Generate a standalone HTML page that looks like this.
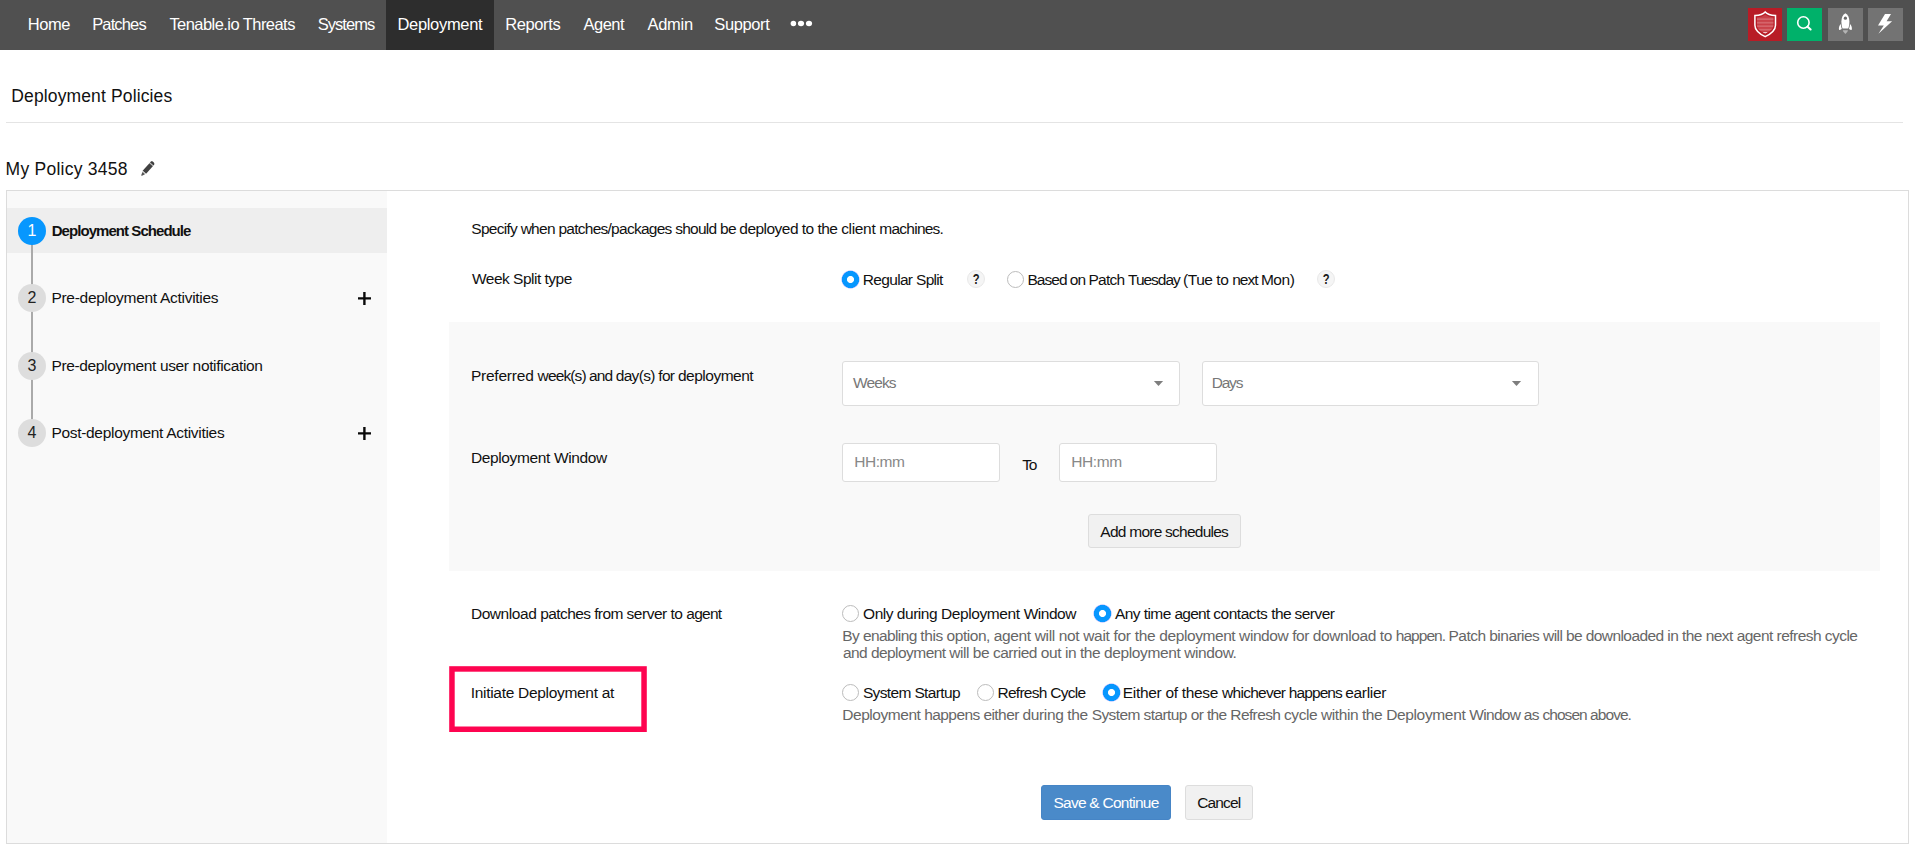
<!DOCTYPE html>
<html lang="en"><head><meta charset="utf-8"><title>Deployment Policies</title>
<style>
html,body{margin:0;padding:0;background:#fff;}
body{width:1915px;height:846px;position:relative;overflow:hidden;font-family:"Liberation Sans",sans-serif;}
.t{position:absolute;white-space:pre;line-height:20px;font-family:"Liberation Sans",sans-serif;}
.a{position:absolute;box-sizing:border-box;}
.nav{left:0;top:0;width:1915px;height:50px;background:#505050;}
.act{left:386px;top:0;width:108px;height:50px;background:#2d2d2d;}
.ib{top:8px;height:33px;}
.hr{left:6px;top:122px;width:1897px;height:1px;background:#e4e4e4;}
.panel{left:6px;top:190px;width:1903px;height:654px;border:1px solid #dcdcdc;background:#fff;}
.side{left:7px;top:191px;width:380px;height:652px;background:#f9f9f9;}
.row1{left:7px;top:208px;width:380px;height:45px;background:#eeeeee;}
.vline{left:31px;top:231px;width:2px;height:202px;background:#aaa;}
.circ{left:18px;width:28px;height:28px;border-radius:50%;background:#ddd;color:#222;font-size:16px;line-height:27.5px;text-align:center;}
.circ.on{background:#0797fe;color:#fff;}
.gray{left:449px;top:322px;width:1431px;height:249px;background:#f9f9f9;}
.sel{top:361px;width:338px;height:45px;background:#fff;border:1px solid #ddd;border-radius:3px;}
.inp{top:443px;width:158px;height:39px;background:#fff;border:1px solid #ddd;border-radius:3px;}
.btn{background:#f1f1f1;border:1px solid #ddd;border-radius:3px;}
.pri{background:#4a8ac9;border:1px solid #4685c6;border-radius:3px;}
.r{width:17px;height:17px;border-radius:50%;border:1.5px solid #bcbcbc;background:#fff;}
.r.on{border:0;border-radius:0;width:21px;height:21px;margin:-2px 0 0 -2px;background:radial-gradient(circle 10.5px at 50% 50%,#fff 0,#fff 3.1px,#0797fe 3.9px,#0797fe 8.3px,rgba(110,120,255,.5) 8.7px,rgba(110,120,255,0) 9.5px);}
.q{width:18px;height:18px;border-radius:50%;background:#f5f5f5;border:1px solid #e9e9e9;color:#1a1a1a;font-size:14px;font-weight:700;line-height:16px;text-align:center;}
.q b{display:inline-block;transform:scaleX(.8);}

</style></head>
<body>
<div class="a nav"></div>
<div class="a act"></div>
<svg class="a" style="left:788px;top:18px" width="26" height="11" viewBox="0 0 26 11"><ellipse cx="5.4" cy="5.5" rx="2.75" ry="2.65" fill="#fff"/><ellipse cx="13" cy="5.5" rx="3.05" ry="2.65" fill="#fff"/><ellipse cx="21" cy="5.5" rx="3.05" ry="2.65" fill="#fff"/></svg>
<div class="a ib" style="left:1748px;width:34px;background:#b81c26"></div>
<div class="a ib" style="left:1787px;width:35px;background:#00b16a"></div>
<div class="a ib" style="left:1828px;width:35px;background:#737373"></div>
<div class="a ib" style="left:1868px;width:35px;background:#737373"></div>
<svg class="a" style="left:1748px;top:8px" width="34" height="33" viewBox="0 0 34 33">
<defs><clipPath id="sh"><path d="M17.2 6.4 C15.6 7.8 12.6 9.1 9 9.2 L9 17 C9 20.8 12 23 17.2 25.6 C22.4 23 25.4 20.8 25.4 17 L25.4 9.2 C21.8 9.1 18.8 7.8 17.2 6.4 Z"/></clipPath></defs>
<path d="M17.2 3.9 C15.6 5.8 11.4 7.3 6.9 7.4 L6.9 17.2 C6.9 22.4 11 25.6 17.2 28.7 C23.4 25.6 27.5 22.4 27.5 17.2 L27.5 7.4 C23 7.3 18.8 5.8 17.2 3.9 Z" fill="none" stroke="#fff" stroke-width="1.5" stroke-linejoin="miter"/>
<g clip-path="url(#sh)"><rect x="8" y="6" width="19" height="18.2" fill="#c93f47"/>
<rect x="8" y="10.3" width="19" height="1.8" fill="#d5646a"/><rect x="8" y="13.8" width="19" height="1.8" fill="#d5646a"/><rect x="8" y="17.3" width="19" height="1.8" fill="#d5646a"/><rect x="8" y="20.8" width="19" height="1.8" fill="#d5646a"/>
<path d="M14.3 24.2 L20.1 24.2 L17.2 25.9 Z" fill="#fff"/></g>
</svg>
<svg class="a" style="left:1787px;top:8px" width="35" height="33" viewBox="0 0 35 33">
<circle cx="16.4" cy="14.5" r="5.7" fill="none" stroke="#fff" stroke-width="1.6"/>
<path d="M20.6 18.7 L23.6 21.5" stroke="#fff" stroke-width="2.1" stroke-linecap="round"/>
</svg>
<svg class="a" style="left:1828px;top:8px" width="35" height="33" viewBox="0 0 35 33">
<path d="M17.4 5.3 C15 6.6 13.4 9.6 13.4 13.4 C13.4 16.4 13.9 18.6 14.6 20.6 L20.2 20.6 C20.9 18.6 21.4 16.4 21.4 13.4 C21.4 9.6 19.8 6.6 17.4 5.3 Z" fill="#fff"/>
<path d="M12.8 15.9 C11.2 17.4 10.6 19.6 11 21.6 C11.1 22 11.5 22.1 11.9 21.9 L13.8 20.9 C13.2 19.4 12.8 17.6 12.8 15.9 Z M22 15.9 C23.6 17.4 24.2 19.6 23.8 21.6 C23.7 22 23.3 22.1 22.9 21.9 L21 20.9 C21.6 19.4 22 17.6 22 15.9 Z" fill="#fff"/>
<circle cx="17.4" cy="10.2" r="1.6" fill="#6a6a6a"/>
<path d="M14.8 22.3 L20 22.3 L19.4 23.8 L17.4 26 L15.4 23.8 Z" fill="#b4b4b4"/>
</svg>
<svg class="a" style="left:1868px;top:8px" width="35" height="33" viewBox="0 0 35 33">
<path d="M17 6 L23 6 L18.6 13.2 L24.1 13.2 L10.4 25.8 L15.8 17.4 L10 17.4 Z" fill="#fff"/>
</svg>
<div class="a hr"></div>
<svg class="a" style="left:139px;top:160px" width="17" height="18" viewBox="0 0 17 18">
<g transform="translate(8.35 8.95) rotate(41.5)">
<path d="M-2.3 -6.5 L-2.3 -7.6 C-2.3 -9.6 2.3 -9.6 2.3 -7.6 L2.3 -6.5 Z" fill="#3d3d3d"/>
<rect x="-2.3" y="-6.5" width="4.6" height="0.8" fill="#b5b5b5"/>
<rect x="-2.3" y="-5.7" width="4.6" height="10.2" fill="#414141"/>
<path d="M-2.3 4.5 L2.3 4.5 L1.7 5.5 L-1.7 5.5 Z" fill="#c8c8c8"/>
<path d="M-1.7 5.5 L1.7 5.5 L0.5 8.6 C0.3 9.2 -0.3 9.2 -0.5 8.6 Z" fill="#555"/>
</g>
</svg>
<div class="a panel"></div>
<div class="a side"></div>
<div class="a row1"></div>
<div class="a vline"></div>
<div class="a circ on" style="top:217px">1</div>
<div class="a circ" style="top:284px">2</div>
<div class="a circ" style="top:352px">3</div>
<div class="a circ" style="top:419px">4</div>
<svg class="a" style="left:358px;top:292px" width="13" height="13" viewBox="0 0 13 13"><path d="M0 6.4 H13 M6.4 0 V13" stroke="#0a0a0a" stroke-width="2.4" fill="none"/></svg>
<svg class="a" style="left:358px;top:427px" width="13" height="13" viewBox="0 0 13 13"><path d="M0 6.4 H13 M6.4 0 V13" stroke="#0a0a0a" stroke-width="2.4" fill="none"/></svg>
<div class="a gray"></div>
<div class="a sel" style="left:842px"></div>
<div class="a sel" style="left:1202px;width:337px"></div>
<svg class="a" style="left:1153px;top:380px" width="11" height="7" viewBox="0 0 11 7"><path d="M0.9 0.9 H10.1 L5.5 6 Z" fill="#7e7e7e"/></svg>
<svg class="a" style="left:1511px;top:380px" width="11" height="7" viewBox="0 0 11 7"><path d="M0.9 0.9 H10.1 L5.5 6 Z" fill="#7e7e7e"/></svg>
<div class="a inp" style="left:842px"></div>
<div class="a inp" style="left:1059px"></div>
<div class="a btn" style="left:1088px;top:514px;width:153px;height:34px"></div>
<div class="a r on" style="left:842px;top:271px"></div>
<div class="a q" style="left:967px;top:269.5px"><b>?</b></div>
<div class="a r" style="left:1006.5px;top:271px"></div>
<div class="a q" style="left:1317px;top:269.5px"><b>?</b></div>
<div class="a r" style="left:842px;top:605px"></div>
<div class="a r on" style="left:1094px;top:605px"></div>
<div class="a r" style="left:842px;top:684px"></div>
<div class="a r" style="left:976.7px;top:684px"></div>
<div class="a r on" style="left:1102.5px;top:684px"></div>
<svg class="a" style="left:449px;top:666px" width="198" height="66" viewBox="0 0 198 66"><rect x="2.95" y="2.95" width="192.1" height="60.3" fill="none" stroke="#fe0450" stroke-width="5.5"/></svg>
<div class="a pri" style="left:1041px;top:785px;width:130px;height:35px"></div>
<div class="a btn" style="left:1185px;top:785px;width:68px;height:35px"></div>

<span class="t" style="left:27.65px;top:14px;font-size:16.5px;color:#fff;letter-spacing:-0.376px">Home</span>
<span class="t" style="left:92.15px;top:14px;font-size:16.5px;color:#fff;letter-spacing:-0.846px">Patches</span>
<span class="t" style="left:169.43px;top:14px;font-size:16.5px;color:#fff;letter-spacing:-0.558px">Tenable.io Threats</span>
<span class="t" style="left:317.75px;top:14px;font-size:16.5px;color:#fff;letter-spacing:-0.970px">Systems</span>
<span class="t" style="left:397.45px;top:14px;font-size:16.5px;color:#fff;letter-spacing:-0.319px">Deployment</span>
<span class="t" style="left:505.15px;top:14px;font-size:16.5px;color:#fff;letter-spacing:-0.372px">Reports</span>
<span class="t" style="left:583.47px;top:14px;font-size:16.5px;color:#fff;letter-spacing:-0.493px">Agent</span>
<span class="t" style="left:647.47px;top:14px;font-size:16.5px;color:#fff;letter-spacing:-0.269px">Admin</span>
<span class="t" style="left:714.35px;top:14px;font-size:16.5px;color:#fff;letter-spacing:-0.404px">Support</span>
<span class="t" style="left:11.26px;top:86px;font-size:17.5px;color:#111;letter-spacing:0.134px">Deployment Policies</span>
<span class="t" style="left:5.56px;top:159px;font-size:17.5px;color:#111;letter-spacing:0.256px">My Policy 3458</span>
<span class="t" style="left:51.70px;top:221px;font-size:15px;color:#111;letter-spacing:-0.944px;font-weight:700">Deployment Schedule</span>
<span class="t" style="left:51.43px;top:288px;font-size:15.5px;color:#111;letter-spacing:-0.287px">Pre-deployment Activities</span>
<span class="t" style="left:51.43px;top:356px;font-size:15.5px;color:#111;letter-spacing:-0.349px">Pre-deployment user notification</span>
<span class="t" style="left:51.43px;top:423px;font-size:15.5px;color:#111;letter-spacing:-0.308px">Post-deployment Activities</span>
<span class="t" style="left:471.93px;top:269px;font-size:15.5px;color:#111;letter-spacing:-0.504px">Week Split type</span>
<span class="t" style="left:862.83px;top:270px;font-size:15.5px;color:#111;letter-spacing:-0.680px">Regular Split</span>
<span class="t" style="left:853.03px;top:373px;font-size:15.5px;color:#777;letter-spacing:-0.891px">Weeks</span>
<span class="t" style="left:1211.63px;top:373px;font-size:15.5px;color:#777;letter-spacing:-1.166px">Days</span>
<span class="t" style="left:470.93px;top:448px;font-size:15.5px;color:#111;letter-spacing:-0.364px">Deployment Window</span>
<span class="t" style="left:854.23px;top:452px;font-size:15.5px;color:#888;letter-spacing:-0.435px">HH:mm</span>
<span class="t" style="left:1022.35px;top:455px;font-size:15.5px;color:#111;letter-spacing:-1.276px">To</span>
<span class="t" style="left:1071.13px;top:452px;font-size:15.5px;color:#888;letter-spacing:-0.360px">HH:mm</span>
<span class="t" style="left:1100.37px;top:522px;font-size:15.5px;color:#111;letter-spacing:-0.754px">Add more schedules</span>
<span class="t" style="left:470.77px;top:683px;font-size:15.5px;color:#111;letter-spacing:-0.304px">Initiate Deployment at</span>
<span class="t" style="left:862.90px;top:683px;font-size:15.5px;color:#111;letter-spacing:-0.640px">System Startup</span>
<span class="t" style="left:997.53px;top:683px;font-size:15.5px;color:#111;letter-spacing:-0.732px">Refresh Cycle</span>
<span class="t" style="left:1053.50px;top:793px;font-size:15.5px;color:#fff;letter-spacing:-0.753px">Save &amp; Continue</span>
<span class="t" style="left:1197.31px;top:793px;font-size:15.5px;color:#111;letter-spacing:-0.885px">Cancel</span>
<span class="t" style="left:842.33px;top:626px;font-size:15.5px;color:#666;letter-spacing:-0.606px">By enabling </span>
<span class="t" style="left:920.37px;top:626px;font-size:15.5px;color:#666;letter-spacing:-0.447px">this option, </span>
<span class="t" style="left:993.84px;top:626px;font-size:15.5px;color:#666;letter-spacing:-0.360px">agent will not </span>
<span class="t" style="left:1083.22px;top:626px;font-size:15.5px;color:#666;letter-spacing:-0.308px">wait for the </span>
<span class="t" style="left:1159.35px;top:626px;font-size:15.5px;color:#666;letter-spacing:-0.425px">deployment </span>
<span class="t" style="left:1239.12px;top:626px;font-size:15.5px;color:#666;letter-spacing:-0.425px">window for </span>
<span class="t" style="left:1312.85px;top:626px;font-size:15.5px;color:#666;letter-spacing:-0.419px">download to </span>
<span class="t" style="left:1395.73px;top:626px;font-size:15.5px;color:#666;letter-spacing:-0.943px">happen. </span>
<span class="t" style="left:1448.53px;top:626px;font-size:15.5px;color:#666;letter-spacing:-0.529px">Patch binaries </span>
<span class="t" style="left:1543.12px;top:626px;font-size:15.5px;color:#666;letter-spacing:-0.596px">will be </span>
<span class="t" style="left:1585.75px;top:626px;font-size:15.5px;color:#666;letter-spacing:-0.576px">downloaded in </span>
<span class="t" style="left:1681.97px;top:626px;font-size:15.5px;color:#666;letter-spacing:-0.533px">the next agent refresh cycle</span>
<span class="t" style="left:842.94px;top:643px;font-size:15.5px;color:#666;letter-spacing:-0.549px">and deployment </span>
<span class="t" style="left:949.32px;top:643px;font-size:15.5px;color:#666;letter-spacing:-0.471px">will be carried </span>
<span class="t" style="left:1040.85px;top:643px;font-size:15.5px;color:#666;letter-spacing:-0.443px">out in the </span>
<span class="t" style="left:1104.05px;top:643px;font-size:15.5px;color:#666;letter-spacing:-0.380px">deployment </span>
<span class="t" style="left:1184.32px;top:643px;font-size:15.5px;color:#666;letter-spacing:-0.427px">window.</span>
<span class="t" style="left:842.33px;top:705px;font-size:15.5px;color:#666;letter-spacing:-0.465px">Deployment </span>
<span class="t" style="left:924.23px;top:705px;font-size:15.5px;color:#666;letter-spacing:-0.569px">happens either </span>
<span class="t" style="left:1022.55px;top:705px;font-size:15.5px;color:#666;letter-spacing:-0.373px">during the </span>
<span class="t" style="left:1091.70px;top:705px;font-size:15.5px;color:#666;letter-spacing:-0.582px">System startup </span>
<span class="t" style="left:1190.65px;top:705px;font-size:15.5px;color:#666;letter-spacing:-0.609px">or the Refresh </span>
<span class="t" style="left:1284.04px;top:705px;font-size:15.5px;color:#666;letter-spacing:-0.431px">cycle within the </span>
<span class="t" style="left:1386.13px;top:705px;font-size:15.5px;color:#666;letter-spacing:-0.347px">Deployment </span>
<span class="t" style="left:1469.33px;top:705px;font-size:15.5px;color:#666;letter-spacing:-0.702px">Window as </span>
<span class="t" style="left:1542.44px;top:705px;font-size:15.5px;color:#666;letter-spacing:-0.946px">chosen above.</span>
<span class="t" style="left:471.30px;top:219px;font-size:15.5px;color:#111;letter-spacing:-0.723px">Specify when </span>
<span class="t" style="left:558.40px;top:219px;font-size:15.5px;color:#111;letter-spacing:-0.735px">patches/packages </span>
<span class="t" style="left:675.17px;top:219px;font-size:15.5px;color:#111;letter-spacing:-0.735px">should be </span>
<span class="t" style="left:739.35px;top:219px;font-size:15.5px;color:#111;letter-spacing:-0.533px">deployed to the </span>
<span class="t" style="left:841.14px;top:219px;font-size:15.5px;color:#111;letter-spacing:-0.324px">client </span>
<span class="t" style="left:879.37px;top:219px;font-size:15.5px;color:#111;letter-spacing:-0.764px">machines.</span>
<span class="t" style="left:1027.43px;top:270px;font-size:15.5px;color:#111;letter-spacing:-0.968px">Based on </span>
<span class="t" style="left:1088.53px;top:270px;font-size:15.5px;color:#111;letter-spacing:-0.738px">Patch </span>
<span class="t" style="left:1128.05px;top:270px;font-size:15.5px;color:#111;letter-spacing:-1.025px">Tuesday </span>
<span class="t" style="left:1183.04px;top:270px;font-size:15.5px;color:#111;letter-spacing:-0.464px">(Tue to </span>
<span class="t" style="left:1232.17px;top:270px;font-size:15.5px;color:#111;letter-spacing:-0.970px">next </span>
<span class="t" style="left:1260.93px;top:270px;font-size:15.5px;color:#111;letter-spacing:-0.465px">Mon)</span>
<span class="t" style="left:470.93px;top:366px;font-size:15.5px;color:#111;letter-spacing:-0.223px">Preferred </span>
<span class="t" style="left:537.62px;top:366px;font-size:15.5px;color:#111;letter-spacing:-0.884px">week(s) and </span>
<span class="t" style="left:615.75px;top:366px;font-size:15.5px;color:#111;letter-spacing:-0.688px">day(s) for </span>
<span class="t" style="left:677.95px;top:366px;font-size:15.5px;color:#111;letter-spacing:-0.497px">deployment</span>
<span class="t" style="left:1122.73px;top:683px;font-size:15.5px;color:#111;letter-spacing:-0.304px">Either of these </span>
<span class="t" style="left:1222.12px;top:683px;font-size:15.5px;color:#111;letter-spacing:-0.739px">whichever </span>
<span class="t" style="left:1288.83px;top:683px;font-size:15.5px;color:#111;letter-spacing:-0.921px">happens </span>
<span class="t" style="left:1345.24px;top:683px;font-size:15.5px;color:#111;letter-spacing:-0.327px">earlier</span>
<span class="t" style="left:1115.07px;top:604px;font-size:15.5px;color:#111;letter-spacing:-0.582px">Any time </span>
<span class="t" style="left:1174.44px;top:604px;font-size:15.5px;color:#111;letter-spacing:-0.735px">agent </span>
<span class="t" style="left:1213.14px;top:604px;font-size:15.5px;color:#111;letter-spacing:-0.434px">contacts </span>
<span class="t" style="left:1271.27px;top:604px;font-size:15.5px;color:#111;letter-spacing:-0.639px">the </span>
<span class="t" style="left:1294.57px;top:604px;font-size:15.5px;color:#111;letter-spacing:-0.538px">server</span>
<span class="t" style="left:863.07px;top:604px;font-size:15.5px;color:#111;letter-spacing:-0.476px">Only during </span>
<span class="t" style="left:940.93px;top:604px;font-size:15.5px;color:#111;letter-spacing:-0.392px">Deployment </span>
<span class="t" style="left:1023.63px;top:604px;font-size:15.5px;color:#111;letter-spacing:-0.462px">Window</span>
<span class="t" style="left:470.93px;top:604px;font-size:15.5px;color:#111;letter-spacing:-0.442px">Download </span>
<span class="t" style="left:540.20px;top:604px;font-size:15.5px;color:#111;letter-spacing:-0.580px">patches from </span>
<span class="t" style="left:626.57px;top:604px;font-size:15.5px;color:#111;letter-spacing:-0.484px">server to </span>
<span class="t" style="left:686.34px;top:604px;font-size:15.5px;color:#111;letter-spacing:-0.756px">agent</span>
</body></html>
